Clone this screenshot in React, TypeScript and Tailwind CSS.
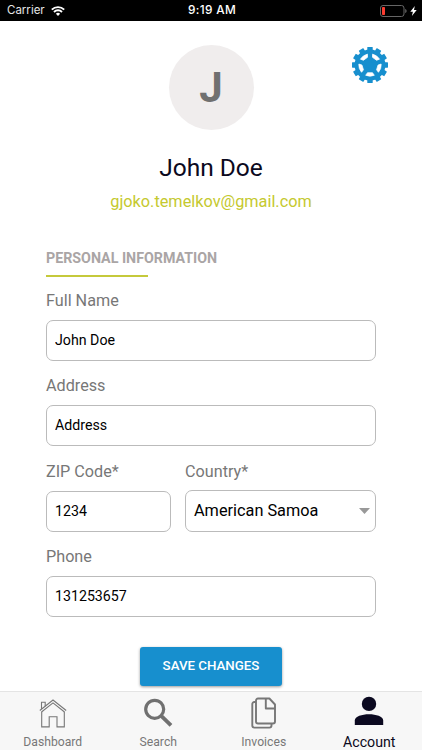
import type { ReactNode } from "react";

const SPOKES = [0, 72, 144, 216, 288];
const TEETH = [0, 30, 60, 90, 120, 150];

function StatusBar() {
  return (
    <div className="flex h-[21px] shrink-0 items-center bg-black pl-[7px] pr-[5px] pt-px font-['Inter','Roboto',sans-serif] text-[11.5px] text-white">
      <div className="flex flex-1 items-center gap-[6px]">
        <span className="text-neutral-200">Carrier</span>
        <svg width="14" height="10" viewBox="0 0 14 10" fill="none" stroke="#fff" strokeWidth="1.9" className="-mt-px">
          <path d="M0.8 3.7a8.8 8.8 0 0 1 12.4 0" />
          <path d="M3 6a5.6 5.6 0 0 1 8 0" />
          <path d="M7 9.9L4.9 7.7a3 3 0 0 1 4.2 0z" fill="#fff" stroke="none" />
        </svg>
      </div>
      <span className="text-[11.8px] font-medium tracking-[0.35px]">9:19 AM</span>
      <div className="-mt-px flex flex-1 items-center justify-end gap-[3px]">
        <svg width="27" height="12" viewBox="0 0 27 12" fill="none">
          <rect x="0.5" y="0.5" width="23.5" height="11" rx="2.5" stroke="#666" />
          <rect x="2" y="2" width="3" height="8" rx="0.8" fill="#fb3b30" />
          <path d="M25.3 4v4c.8-.4 1.2-1 1.2-2S26.1 4.4 25.3 4z" fill="#777" />
        </svg>
        <svg width="7" height="10" viewBox="0 0 7 10" fill="#fff">
          <path d="M4.8 0L0.3 5.7h2.6L1.9 10l4.8-6H4z" />
        </svg>
      </div>
    </div>
  );
}

function GearIcon() {
  return (
    <svg width="36" height="36" viewBox="-18 -18 36 36">
      <circle r="15.4" fill="#178fce" />
      {TEETH.map((a) => (
        <rect key={a} x="-2.7" y="-18" width="5.4" height="36" rx="0.6" fill="#178fce" transform={`rotate(${a})`} />
      ))}
      {SPOKES.map((a) => (
        <path
          key={a}
          d="M-2.5 7.7H2.5L4.3 10.3Q0 12.1 -4.3 10.3Z"
          fill="#fff"
          stroke="#fff"
          strokeWidth="0.7"
          strokeLinejoin="round"
          transform={`rotate(${a})`}
        />
      ))}
    </svg>
  );
}

function Field({ label, children, className = "" }: { label: string; children: ReactNode; className?: string }) {
  return (
    <label className={`block h-[85.5px] ${className}`}>
      <span className="block h-[30px] text-[16.2px] leading-[22px] text-[#777]">{label}</span>
      {children}
    </label>
  );
}

function TextInput({ value }: { value: string }) {
  return (
    <input
      defaultValue={value}
      className="block h-[41px] w-full rounded-[7px] border border-[#bbb] bg-white px-2 pb-px text-[14.2px] text-black outline-none"
    />
  );
}

function Tab({ label, active = false, children }: { label: string; active?: boolean; children: ReactNode }) {
  return (
    <button type="button" className="flex flex-1 flex-col items-center justify-start">
      <span className="flex h-[42px] items-center justify-center">{children}</span>
      <span className={active ? "h-[16px] text-[14.2px] leading-[16px] text-[#0b0920]" : "h-[16px] text-[12.2px] leading-[16px] text-[#777]"}>
        {label}
      </span>
    </button>
  );
}

function TabBar() {
  return (
    <nav className="flex h-[59px] shrink-0 border-t border-[#e4e4e4] bg-[#f7f7f7]">
      <Tab label="Dashboard">
        <svg width="28" height="30" viewBox="0 0 28 30" fill="none" stroke="#777" strokeWidth="1.1">
          <path d="M0.8 12.5L14 2L27.2 12.5" />
          <path d="M2.5 14L14 4.9L25.5 14" />
          <path d="M2.5 11V4.3h3.7v4" />
          <path d="M2.7 13.8V28.9H10.2V18.7H18V28.9H25.3V13.8" />
        </svg>
      </Tab>
      <Tab label="Search">
        <svg width="30" height="30" viewBox="0 0 30 30" fill="none" stroke="#707070">
          <circle cx="11.7" cy="11.3" r="9" strokeWidth="3.2" />
          <path d="M18.5 18.2L28 27.4" strokeWidth="3.8" />
        </svg>
      </Tab>
      <Tab label="Invoices">
        <svg width="26" height="32" viewBox="0 0 26 32" fill="none" stroke="#777" strokeWidth="1.9" strokeLinejoin="round">
          <path d="M4.6 5H3.3a2 2 0 0 0-2 2V28.6a2 2 0 0 0 2 2H18.5a2 2 0 0 0 2-2V27" />
          <path d="M7 1.5H18.4L24 7.5V24.5a2 2 0 0 1-2 2H7a2 2 0 0 1-2-2V3.5a2 2 0 0 1 2-2z" />
          <path d="M14.8 1.8V11.5H23.8" />
        </svg>
      </Tab>
      <Tab label="Account" active>
        <svg width="30" height="30" viewBox="0 0 30 30" fill="#0b0920" className="-mt-[4px]">
          <circle cx="15" cy="7.9" r="7.2" />
          <path d="M0.8 29V24.5C0.8 20.3 8 18.2 15 18.2S29.2 20.3 29.2 24.5V29z" />
        </svg>
      </Tab>
    </nav>
  );
}

export default function App() {
  return (
    <div className="flex h-[750px] w-[422px] flex-col overflow-hidden bg-white font-['Roboto',sans-serif]">
      <StatusBar />
      <main className="relative min-h-0 flex-1">
        <button type="button" aria-label="Settings" className="absolute right-[34px] top-[26px]">
          <GearIcon />
        </button>
        <header className="flex flex-col items-center pt-6">
          <div className="flex h-[85px] w-[85px] items-center justify-center rounded-full bg-[#f0eded] text-[42px] font-bold text-[#707070]">
            J
          </div>
          <h1 className="mt-[21px] text-[24.5px] leading-[34px] text-[#0b0920]">John Doe</h1>
          <p className="mt-[6px] text-[16.3px] leading-[22px] text-[#c5c92f]">gjoko.temelkov@gmail.com</p>
        </header>
        <form className="mx-[46px] mt-[34px]" onSubmit={(e) => e.preventDefault()}>
          <h2 className="h-[28px] text-[14.25px] font-bold leading-[22px] text-[#aaa5a5]">PERSONAL INFORMATION</h2>
          <div className="mb-[12.7px] h-[2px] w-[102px] bg-[#c5c93b]" />
          <Field label="Full Name">
            <TextInput value="John Doe" />
          </Field>
          <Field label="Address">
            <TextInput value="Address" />
          </Field>
          <div className="flex gap-[14px]">
            <Field label="ZIP Code*" className="w-[125px]">
              <TextInput value="1234" />
            </Field>
            <Field label="Country*" className="flex-1">
              <button
                type="button"
                className="-mt-[0.5px] flex h-[42px] w-full items-center justify-between rounded-[7px] border border-[#bbb] pl-2 pr-[5px] text-[16.3px] text-black"
              >
                American Samoa
                <svg width="11" height="6" viewBox="0 0 11 6" fill="#999">
                  <path d="M0 0h11L5.5 6z" />
                </svg>
              </button>
            </Field>
          </div>
          <Field label="Phone">
            <TextInput value="131253657" />
          </Field>
          <button
            type="submit"
            className="mx-auto mt-[15px] block h-[39px] w-[142px] rounded-[3px] bg-[#178fce] pb-px text-[13.3px] font-medium text-white shadow-[0_1px_3px_rgba(0,0,0,0.4)]"
          >
            SAVE CHANGES
          </button>
        </form>
      </main>
      <TabBar />
    </div>
  );
}
